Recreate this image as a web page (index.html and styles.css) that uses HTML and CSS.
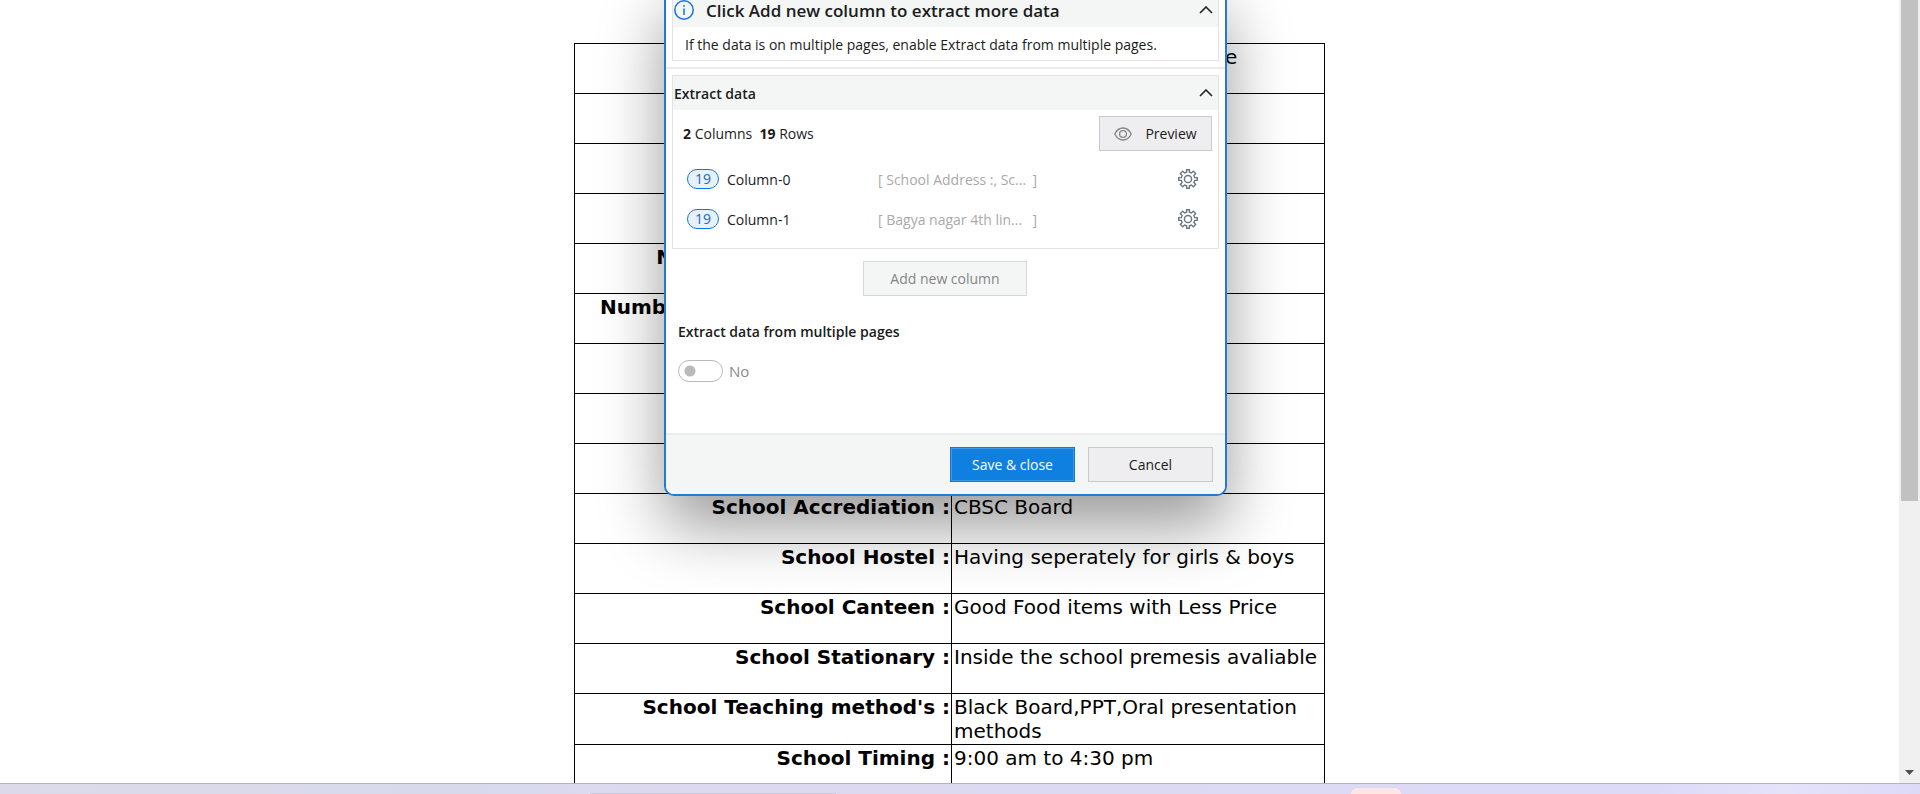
FILE: index.html
```html
<!DOCTYPE html>
<html lang="en">
<head>
<meta charset="utf-8">
<title>School details</title>
<link rel="stylesheet" href="styles.css">
</head>
<body>
<svg class="defs" aria-hidden="true">
  <symbol id="chevron" viewBox="0 0 14 8"><path d="M1 7 7 1l6 6" fill="none" stroke="#222" stroke-width="1.6"/></symbol>
  <symbol id="gear" viewBox="0 0 20 20"><path d="M8.6 .7h2.8v2.5l2 .8 1.9-1.7 2.3 2.3-1.7 1.9.8 2.1h2.6v2.8h-2.6l-.8 2.1 1.7 1.9-2.3 2.3-1.9-1.7-2 .8v2.5H8.6v-2.5l-2-.8-1.9 1.7-2.3-2.3 1.7-1.9-.8-2.1H.7V8.6h2.6l.8-2.1-1.7-1.9 2.3-2.3L6.600 4l2-.8z" fill="none" stroke="#6b7883" stroke-width="1.4"/><circle cx="10" cy="10" r="3.6" fill="none" stroke="#6b7883" stroke-width="1.5"/></symbol>
</svg>
<div class="browser">
  <main class="page">
    <table class="details">
      <tbody>
        <tr><th scope="row"></th><td>Bagya nagar 4th line,ongole</td></tr>
        <tr><th scope="row"></th><td></td></tr>
        <tr><th scope="row"></th><td></td></tr>
        <tr><th scope="row"></th><td></td></tr>
        <tr><th scope="row">Number of Working days :</th><td></td></tr>
        <tr><th scope="row">Number of Students in school :</th><td></td></tr>
        <tr><th scope="row"></th><td></td></tr>
        <tr><th scope="row"></th><td></td></tr>
        <tr><th scope="row"></th><td></td></tr>
        <tr><th scope="row">School Accrediation :</th><td>CBSC Board</td></tr>
        <tr><th scope="row">School Hostel :</th><td>Having seperately for girls &amp; boys</td></tr>
        <tr><th scope="row">School Canteen :</th><td>Good Food items with Less Price</td></tr>
        <tr><th scope="row">School Stationary :</th><td>Inside the school premesis avaliable</td></tr>
        <tr><th scope="row">School Teaching method's :</th><td>Black Board,PPT,Oral presentation methods</td></tr>
        <tr><th scope="row">School Timing :</th><td>9:00 am to 4:30 pm</td></tr>
      </tbody>
    </table>
  </main>
  <div class="scrollbar">
    <div class="thumb"></div>
    <svg class="arrow" width="9" height="5" viewBox="0 0 9 5"><path d="M0 0h9L4.500 5z" fill="#505050"/></svg>
  </div>
</div>
<div class="taskbar"><span class="search"></span><span class="app"></span></div>

<section class="dialog" role="dialog" aria-label="Extract data">
  <div class="intro">
    <div class="panel">
      <div class="panel-head info-head">
        <svg width="20" height="20" viewBox="0 0 20 20"><circle cx="10" cy="10" r="9.200" fill="none" stroke="#1a73d8" stroke-width="1.500"/><path d="M10 8.500V15M10 5v1.800" stroke="#1a73d8" stroke-width="1.500"/></svg>
        <h2>Click Add new column to extract more data</h2>
        <button class="icon-btn" aria-label="Collapse tip"><svg width="14" height="8"><use href="#chevron"/></svg></button>
      </div>
      <p class="tip">If the data is on multiple pages, enable Extract data from multiple pages.</p>
    </div>
  </div>
  <div class="content">
    <div class="panel">
      <div class="panel-head">
        <h3>Extract data</h3>
        <button class="icon-btn" aria-label="Collapse extract data"><svg width="14" height="8"><use href="#chevron"/></svg></button>
      </div>
      <div class="summary">
        <p><b>2</b> Columns&nbsp; <b>19</b> Rows</p>
        <button class="btn preview"><svg width="18" height="14" viewBox="0 0 18 14"><path d="M.8 7C2.700 3 5.500 1 9 1s6.300 2 8.200 6c-1.900 4-4.700 6-8.200 6S2.700 11 .8 7z" fill="none" stroke="#858585" stroke-width="1.300"/><circle cx="9" cy="7" r="3.400" fill="none" stroke="#858585" stroke-width="1.300"/></svg>Preview</button>
      </div>
      <ul class="columns">
        <li><span class="badge">19</span><span class="name">Column-0</span><span class="sample"><span>[ School Address :, Sc...</span><span>]</span></span><button class="icon-btn" aria-label="Column-0 settings"><svg width="20" height="20"><use href="#gear"/></svg></button></li>
        <li><span class="badge">19</span><span class="name">Column-1</span><span class="sample"><span>[ Bagya nagar 4th lin...</span><span>]</span></span><button class="icon-btn" aria-label="Column-1 settings"><svg width="20" height="20"><use href="#gear"/></svg></button></li>
      </ul>
    </div>
    <button class="btn add" disabled>Add new column</button>
    <div class="multi">
      <h3 id="multi-title">Extract data from multiple pages</h3>
      <label><input type="checkbox" role="switch" disabled aria-describedby="multi-title">No</label>
    </div>
  </div>
  <div class="footer">
    <button class="btn primary">Save &amp; close</button>
    <button class="btn">Cancel</button>
  </div>
</section>
</body>
</html>
```

FILE: styles.css
```css
* { box-sizing: border-box; }
html, body { height: 100%; }
body {
  margin: 0;
  display: flex;
  flex-direction: column;
  overflow: hidden;
  background: #fff;
  color: #000;
  font-family: "Open Sans", sans-serif;
}
h2, h3, p, ul { margin: 0; padding: 0; }
.defs { position: absolute; width: 0; height: 0; }

/* web page */
.browser { flex: 1; min-height: 0; display: flex; overflow: hidden; }
.page { flex: 1; padding-top: 43px; }
.details {
  width: 751px;
  margin: 0 auto;
  border-collapse: collapse;
  table-layout: fixed;
  font: 20px/24px Verdana, "DejaVu Sans", sans-serif;
}
.details tr { height: 50px; }
.details th, .details td { border: 1px solid #000; padding: 1px 2px; vertical-align: top; }
.details th { width: 377px; text-align: right; white-space: nowrap; padding-right: 1px; }
.details td { text-align: left; }

.scrollbar {
  width: 21px;
  padding: 0 2px 8px;
  background: #f0f0f0;
  display: flex;
  flex-direction: column;
  align-items: center;
  justify-content: space-between;
}
.thumb { width: 17px; height: calc(64% + 5px); background: #c1c1c1; }

.taskbar {
  height: 11px;
  flex: none;
  border-top: 1px solid #b4b2c2;
  background: linear-gradient(90deg, #dcdaea 0, #d8daec 24%, #dcd9ef 34%, #dcdaf7 86%, #e4e3fa 93%, #dcdaf7 100%);
  display: flex;
  align-items: flex-end;
  overflow: hidden;
}
.search { width: 246px; height: 1px; margin-left: 590px; background: #cdc9dc; }
.app { width: 50px; height: 6px; margin-left: 515px; border-radius: 6px 6px 0 0; background: #fde6e6; }

/* dialog */
.dialog {
  position: absolute;
  top: -16px;
  left: 50%;
  width: 563px;
  margin-left: -296px;
  border: 2px solid #1f7bd5;
  border-radius: 10px;
  background: #fff;
  color: #1b1b1b;
  font-size: 14px;
  line-height: 20px;
  overflow: hidden;
  box-shadow: 0 30px 64px rgba(0, 0, 0, .4);
}
.intro { padding: 6px 6px; border-bottom: 2px solid #ebebeb; }
.content { padding: 6px; }
.panel { border: 1px solid #e2e4e4; }
.panel-head {
  display: flex;
  align-items: center;
  justify-content: space-between;
  height: 34px;
  padding: 0 5px 0 1px;
  background: #f4f6f6;
}
.info-head { gap: 12px; }
.info-head h2 { flex: 1; font-size: 17px; line-height: 24px; font-weight: 600; }
h3 { font-size: 14px; font-weight: 600; }
.panel-head h2, .panel-head h3, .name, .sample { padding-top: 2px; }
.tip { padding: 8px 12px 5px; white-space: nowrap; }
.icon-btn { display: flex; padding: 0; border: 0; background: none; }

.btn {
  display: flex;
  align-items: center;
  justify-content: center;
  width: 125px;
  height: 35px;
  padding: 1px 0 0;
  border: 1px solid #c9cacc;
  background: #eeeef0;
  color: #1b1b1b;
  font: 14px/20px "Open Sans", sans-serif;
}
.summary { display: flex; align-items: center; justify-content: space-between; padding: 6px 6px 8px 10px; }
.preview { width: 113px; gap: 13px; }
.columns { list-style: none; padding: 0 20px 9px 14px; }
.columns li { display: flex; align-items: center; height: 40px; }
.badge {
  width: 32px;
  height: 20px;
  border: 1px solid #1a73d8;
  border-radius: 10px;
  background: #e8f0fb;
  color: #2467b3;
  line-height: 17px;
  text-align: center;
}
.name { width: 159px; padding-left: 8px; }
.sample { width: 159px; display: flex; justify-content: space-between; color: #a9a9a9; white-space: nowrap; }
.columns .icon-btn { margin-left: auto; }

.add { width: 164px; margin: 12px auto 0 191px; border-color: #d6d9da; background: #f4f6f6; color: #858585; }
.multi { padding: 26px 6px 45px; }
.multi label { display: flex; align-items: center; gap: 6px; margin-top: 18px; color: #8a8a8a; font-size: 15px; }
.multi input {
  appearance: none;
  width: 45px;
  height: 22px;
  margin: 0;
  border: 1px solid #b9babc;
  border-radius: 11px;
  background: radial-gradient(circle at 11px 10px, #b9babc 5px, transparent 6px);
}

.footer {
  display: flex;
  justify-content: flex-end;
  gap: 13px;
  padding: 12px 12px;
  border-top: 2px solid #ececec;
  background: #f4f6f6;
}
.primary { border-color: #1079d9; background: #0f7fe0; color: #fff; box-shadow: inset 0 0 0 1px #3d96e6; }
```
